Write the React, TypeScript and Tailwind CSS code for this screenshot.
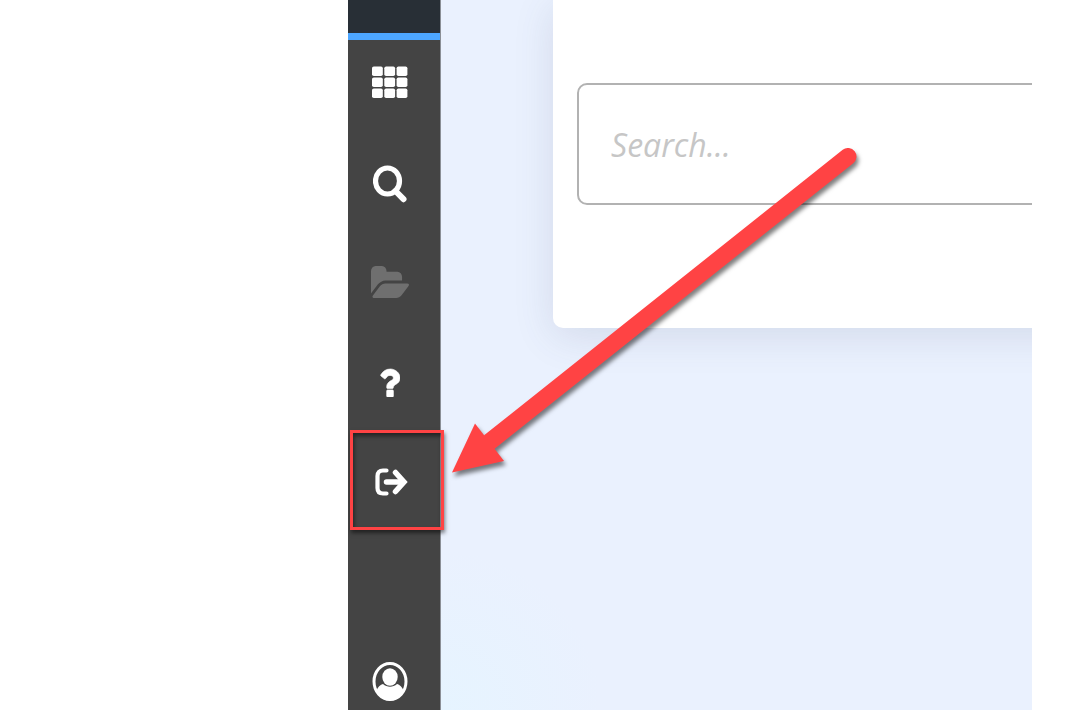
import React from 'react';

const GridIcon = () => (
    <svg width="36" height="32" viewBox="0 0 36 32" fill="currentColor" aria-hidden="true">
        {[0.5, 11.5, 22.5].map((y) =>
            [0, 12.3, 24.6].map((x) => <rect key={`${x}-${y}`} x={x} y={y} width="10.800" height="9.500" rx="1.800" />)
        )}
    </svg>
);

const SearchIcon = () => (
    <svg width="34" height="42" viewBox="0 0 34 42" fill="none" stroke="currentColor" aria-hidden="true">
        <ellipse cx="14.500" cy="20" rx="12" ry="13" strokeWidth="5.200" />
        <path d="M22.500 30 30.500 38.200" strokeWidth="6" strokeLinecap="round" />
    </svg>
);

const FolderIcon = () => (
    <svg width="38" height="32" viewBox="64 128 1880 1408" preserveAspectRatio="none" fill="currentColor" aria-hidden="true">
        <path d="M1943 952q0 31-31 66l-336 396q-43 51-120.5 86.5t-143.5 35.5h-1088q-34 0-60.5-13t-26.5-43q0-31 31-66l336-396q43-51 120.5-86.5t143.5-35.5h1088q34 0 60.5 13t26.5 43zm-343-344v160h-832q-94 0-197 47.5t-164 119.5l-337 396-5 6q0-4-.5-12.5t-.5-12.5v-960q0-92 66-158t158-66h320q92 0 158 66t66 158v32h544q92 0 158 66t66 158z" />
    </svg>
);

const HelpIcon = () => (
    <svg width="20" height="30" viewBox="448 164 956 1372" preserveAspectRatio="none" fill="currentColor" stroke="currentColor" strokeWidth="30" aria-hidden="true">
        <path d="M1088 1256v240q0 16-12 28t-28 12h-240q-16 0-28-12t-12-28v-240q0-16 12-28t28-12h240q16 0 28 12t12 28zm316-600q0 54-15.5 101t-35 76.5-55 59.5-57.5 43.5-61 35.5q-41 23-68.5 65t-27.5 67q0 17-12 32.5t-28 15.5h-240q-15 0-25.5-18.5t-10.500-37.500v-45q0-83 65-156.500t143-108.500q59-27 84-56t25-76q0-42-46.500-74t-107.500-32q-65 0-108 29-35 25-107 115-13 16-31 16-12 0-25-8l-164-125q-13-10-15.500-25t5.500-28q160-266 464-266 80 0 161 31t146 83 106 127.500 41 158.500z" />
    </svg>
);

const SignOutIcon = () => (
    <svg width="36" height="28" viewBox="-3 0 36 28" fill="none" stroke="currentColor" aria-hidden="true">
        <path d="M11.500 2.500H8Q2.500 2.500 2.500 8v12q0 5.500 5.500 5.500h3.500" strokeWidth="4.200" strokeLinecap="round" />
        <path d="M11.500 14H26" strokeWidth="5.500" strokeLinecap="round" />
        <path d="M20.500 4.500 29 14l-8.500 9.500" strokeWidth="5.500" strokeLinecap="round" />
    </svg>
);

const UserIcon = () => (
    <svg width="36" height="40" viewBox="0 0 36 40" fill="currentColor" aria-hidden="true">
        <ellipse cx="18" cy="19.500" rx="16" ry="18" fill="none" stroke="currentColor" strokeWidth="3" />
        <ellipse cx="18" cy="15" rx="7.700" ry="8.700" />
        <path d="M4.500 29C5.500 25 8.500 22.500 11 22c4 3.600 10 3.600 14 0 2.500.5 5.500 3 6.500 7C28.500 35.500 24 38.500 18 38.500S7.500 35.500 4.500 29z" />
    </svg>
);

const items = [
    { label: 'Apps', icon: <GridIcon />, color: 'text-white' },
    { label: 'Search', icon: <SearchIcon />, color: 'text-white' },
    { label: 'Files', icon: <FolderIcon />, color: 'text-[#6f6f6f]' },
    { label: 'Help', icon: <HelpIcon />, color: 'text-white' },
];

const NavButton = ({ label, color = 'text-white', children }: { label: string; color?: string; children: React.ReactNode }) => (
    <button type="button" aria-label={label} className={`relative flex h-[100px] w-full shrink-0 items-center justify-center pr-2 ${color}`}>
        {children}
    </button>
);

const Sidebar = () => (
    <aside className="flex w-[93px] shrink-0 flex-col border-r border-[#8b8f96] bg-[#444444]">
        <div className="h-10 shrink-0 border-b-[7px] border-[#4da6ff] bg-[#282f36]" />
        <nav className="-mt-2 flex flex-col">
            {items.map((item) => (
                <NavButton key={item.label} label={item.label} color={item.color}>
                    {item.icon}
                </NavButton>
            ))}
            <NavButton label="Sign out">
                <SignOutIcon />
                {/* Highlight frame */}
                <span className="absolute -top-0.5 bottom-0.5 left-0.5 -right-1 z-10 border-[3px] border-[#ff4344] shadow-[1px_3px_4px_rgba(0,0,0,0.5),inset_1px_3px_4px_rgba(0,0,0,0.5)]" />
            </NavButton>
            <div className="h-[100px]" />
            <NavButton label="Account">
                <UserIcon />
            </NavButton>
        </nav>
    </aside>
);

const SearchCard = () => (
    <section className="-mr-16 ml-28 rounded-bl-[10px] bg-white pt-[83px] pb-[123px] pl-6 shadow-[0_8px_40px_rgba(70,80,110,0.14)]">
        <input
            type="search"
            aria-label="Search"
            placeholder="Search..."
            className="block h-[122px] w-full rounded-[10px] border-2 border-[#b2b2b2] bg-white px-8 font-['Open_Sans',sans-serif] text-[32px] italic text-gray-700 outline-none placeholder:text-[#c6c6c6]"
        />
    </section>
);

const Arrow = () => (
    <svg
        className="pointer-events-none absolute top-[140px] left-[445px] z-20 drop-shadow-[2px_4px_2px_rgba(0,0,0,0.5)]"
        width="420"
        height="345"
        viewBox="445 140 420 345"
        aria-hidden="true"
    >
        <path d="M490 441.500 848 156.500" stroke="#ff4344" strokeWidth="17" strokeLinecap="round" />
        <path d="M452 472.500 475 423.500 504 461z" fill="#ff4344" />
    </svg>
);

const App: React.FC = () => {
    return (
        <div className="relative flex h-screen overflow-hidden bg-white pr-[50px] pb-1 pl-[348px]">
            <div className="flex min-w-0 flex-1 overflow-hidden">
                <Sidebar />
                <main className="min-w-0 flex-1 bg-[#eaf1fe] bg-[radial-gradient(circle_at_bottom_left,#e6f4ff_0%,#eaf1fe_160px)]">
                    <div className="h-full overflow-hidden">
                        <SearchCard />
                    </div>
                </main>
            </div>
            <Arrow />
        </div>
    );
};

export default App;
